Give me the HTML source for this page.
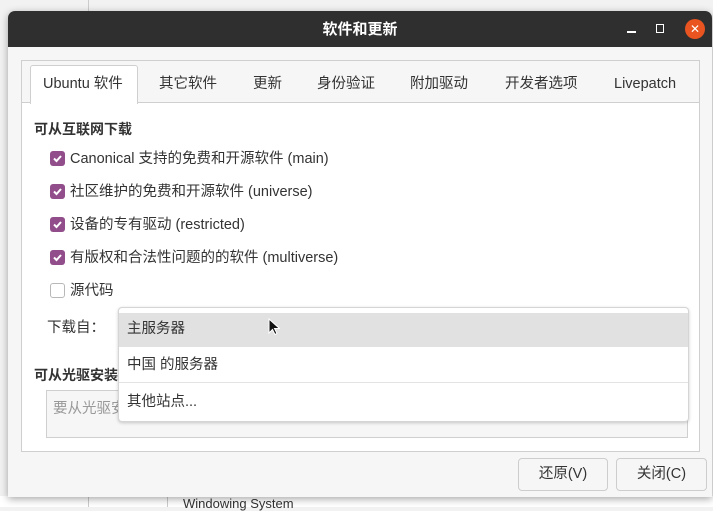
<!DOCTYPE html><html><head><meta charset="utf-8"><style>
*{margin:0;padding:0;box-sizing:border-box}
body{width:713px;height:507px;overflow:hidden;background:#f2f2f2;font-family:"Liberation Sans","Noto Sans CJK SC",sans-serif;font-size:14px;color:#333;position:relative}
.a{position:absolute;line-height:20px}
.cb{position:absolute;left:50px;width:15px;height:15px;border-radius:3px;background:#924d8b}
.cb svg{position:absolute;left:2px;top:2px}
.lbl{position:absolute;left:70px;font-size:14.5px;color:#333;line-height:20px}
.t{position:absolute;top:74px;font-size:14.5px;line-height:20px}
</style></head><body>
<div class="a" style="left:88px;top:0;width:1px;height:12px;background:#ccc"></div>
<div class="a" style="left:0;top:496px;width:713px;height:11px;background:#fff"></div>
<div class="a" style="left:88px;top:496px;width:1px;height:11px;background:#ccc"></div>
<div class="a" style="left:167px;top:496px;width:1px;height:11px;background:#ccc"></div>
<div class="a" style="left:183px;top:497px;font-size:13px;color:#333;line-height:14px">Windowing System</div>
<div class="a" style="left:8px;top:11px;width:704px;height:486px;background:#f6f6f6;border-radius:7px 7px 0 0;box-shadow:0 2px 8px rgba(0,0,0,.35);overflow:hidden">
 <div class="a" style="left:0;top:0;width:704px;height:36px;background:#2f2f2f;color:#fff;font-weight:bold;font-size:15px;text-align:center;line-height:38px">软件和更新</div>
 <div class="a" style="left:619px;top:20px;width:9px;height:1.5px;background:#fff"></div>
 <div class="a" style="left:648px;top:13px;width:8px;height:9px;border:1.5px solid #fff"></div>
 <div class="a" style="left:677px;top:8px;width:20px;height:20px;border-radius:50%;background:#e95420;color:#fff;text-align:center;line-height:20px;font-size:12px">✕</div>
 <div class="a" style="left:13px;top:49px;width:679px;height:392px;border:1px solid #cfcfcf;background:#fff"></div>
 <div class="a" style="left:14px;top:50px;width:677px;height:42px;background:#f6f6f6;border-bottom:1px solid #cfcfcf"></div>
 <div class="a" style="left:22px;top:54px;width:108px;height:39px;background:#fff;border:1px solid #cfcfcf;border-bottom:none;border-radius:3px 3px 0 0"></div>
</div>
<div class="t" style="left:43px">Ubuntu 软件</div>
<div class="t" style="left:159px">其它软件</div>
<div class="t" style="left:253px">更新</div>
<div class="t" style="left:317px">身份验证</div>
<div class="t" style="left:410px">附加驱动</div>
<div class="t" style="left:505px">开发者选项</div>
<div class="t" style="left:614px">Livepatch</div>
<div class="a" style="left:34px;top:119px;font-weight:bold;font-size:14px">可从互联网下载</div>
<div class="cb" style="top:151px"><svg width="11" height="11"><path d="M2 5.5l2.5 2.5 4.5-5" stroke="#fff" stroke-width="2" fill="none"/></svg></div><div class="lbl" style="top:149px">Canonical 支持的免费和开源软件 (main)</div>
<div class="cb" style="top:184px"><svg width="11" height="11"><path d="M2 5.5l2.5 2.5 4.5-5" stroke="#fff" stroke-width="2" fill="none"/></svg></div><div class="lbl" style="top:182px">社区维护的免费和开源软件 (universe)</div>
<div class="cb" style="top:217px"><svg width="11" height="11"><path d="M2 5.5l2.5 2.5 4.5-5" stroke="#fff" stroke-width="2" fill="none"/></svg></div><div class="lbl" style="top:215px">设备的专有驱动 (restricted)</div>
<div class="cb" style="top:250px"><svg width="11" height="11"><path d="M2 5.5l2.5 2.5 4.5-5" stroke="#fff" stroke-width="2" fill="none"/></svg></div><div class="lbl" style="top:248px">有版权和合法性问题的的软件 (multiverse)</div>
<div class="cb" style="top:283px;background:#fff;border:1px solid #b8b8b8"></div><div class="lbl" style="top:281px">源代码</div>
<div class="a" style="left:47px;top:318px;font-size:14.5px">下载自：</div>
<div class="a" style="left:34px;top:365px;font-weight:bold">可从光驱安装</div>
<div class="a" style="left:46px;top:390px;width:642px;height:48px;border:1px solid #cfcfcf;background:#f6f6f6"></div>
<div class="a" style="left:53px;top:399px;color:#999;font-size:14.5px">要从光驱安装</div>
<div class="a" style="left:118px;top:307px;width:571px;height:115px;background:#fff;border:1px solid #d5d5d5;border-radius:4px;box-shadow:0 1px 3px rgba(0,0,0,.2)">
 <div class="a" style="left:0;top:5px;width:569px;height:34px;background:#e1e1e1"></div>
 <div class="a" style="left:8px;top:11px;font-size:14.5px">主服务器</div>
 <div class="a" style="left:0;top:74px;width:569px;height:1px;background:#e4e4e4"></div>
 <div class="a" style="left:8px;top:47px;font-size:14.5px">中国 的服务器</div>
 <div class="a" style="left:8px;top:84px;font-size:14.5px">其他站点...</div>
</div>
<svg class="a" style="left:268px;top:318px" width="12" height="18"><path d="M1 1v14l3.5-3.5 2.5 5 2-1-2.5-5h5z" fill="#111" stroke="#fff" stroke-width="1"/></svg>
<div class="a" style="left:518px;top:458px;width:90px;height:33px;border:1px solid #cdcdcd;border-radius:4px;background:#f6f6f6;text-align:center;line-height:31px;font-size:14.5px">还原(V)</div>
<div class="a" style="left:616px;top:458px;width:91px;height:33px;border:1px solid #cdcdcd;border-radius:4px;background:#f6f6f6;text-align:center;line-height:31px;font-size:14.5px">关闭(C)</div>
</body></html>
